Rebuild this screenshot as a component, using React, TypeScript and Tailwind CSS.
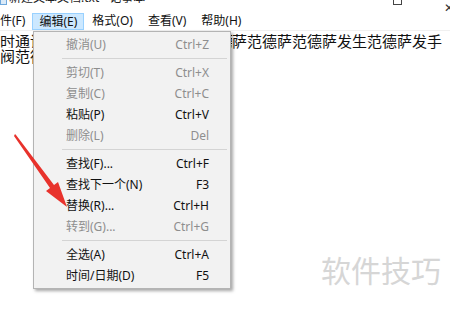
import React from "react";

type Item = { label: string; key: string; disabled?: boolean } | "sep";

const items: Item[] = [
    { label: "撤消(U)", key: "Ctrl+Z", disabled: true },
    "sep",
    { label: "剪切(T)", key: "Ctrl+X", disabled: true },
    { label: "复制(C)", key: "Ctrl+C", disabled: true },
    { label: "粘贴(P)", key: "Ctrl+V" },
    { label: "删除(L)", key: "Del", disabled: true },
    "sep",
    { label: "查找(F)...", key: "Ctrl+F" },
    { label: "查找下一个(N)", key: "F3" },
    { label: "替换(R)...", key: "Ctrl+H" },
    { label: "转到(G)...", key: "Ctrl+G", disabled: true },
    "sep",
    { label: "全选(A)", key: "Ctrl+A" },
    { label: "时间/日期(D)", key: "F5" },
];

const menus = ["编辑(E)", "格式(O)", "查看(V)", "帮助(H)"];

function EditMenu() {
    return (
        <div className="absolute left-[33px] top-[31px] z-10 w-[198px] border border-[#b4b4b4] bg-[#f2f2f2] pt-[2px] pb-[2px] shadow-[2px_2px_3px_rgba(0,0,0,0.35)]">
            {items.map((it, i) =>
                it === "sep" ? (
                    <div key={i} className="flex h-[7px] items-center pl-[28px] pr-[3px]">
                        <div className="h-px w-full bg-[#d4d4d4]" />
                    </div>
                ) : (
                    <div
                        key={i}
                        className={`flex h-[21px] items-center justify-between pl-[32px] pr-[21px] text-[12px] ${
                            it.disabled ? "text-[#8e8e8e]" : "text-[#111]"
                        }`}
                    >
                        <span>{it.label}</span>
                        <span>{it.key}</span>
                    </div>
                )
            )}
        </div>
    );
}

function Arrow() {
    return (
        <svg className="absolute left-0 top-0 z-20" width="120" height="240" viewBox="0 0 120 240">
            <polygon
                points="15,134 16,135 54,185 58,182 67,207 46,191 50,188 14,136"
                fill="#e8322c"
            />
        </svg>
    );
}

export default function App() {
    return (
        <div className="relative h-[309px] w-[450px] overflow-hidden bg-white font-['Noto_Sans','Noto_Sans_CJK_SC',sans-serif] text-black">
            {/* title bar, mostly cut off at the top */}
            <div className="relative h-[12px] overflow-hidden">
                <div className="-mt-[10px] flex items-center">
                    <div className="ml-[0px] h-[14px] w-[7px] border border-[#6fa8dc] bg-[#dbeaf7]" />
                    <span className="ml-[2px] text-[12px] leading-[16px] text-[#222]">新建文本文档.txt - 记事本</span>
                    <div className="ml-auto mr-[48px] h-[14px] w-[9px] border border-[#444]" />
                    <span className="absolute right-[-4px] top-0 text-[12px] leading-[16px] text-[#333]">✕</span>
                </div>
            </div>

            {/* menu bar */}
            <div className="flex h-[19px] items-stretch border-b border-[#f0f0f0] text-[12px] text-[#111]">
                <div className="-ml-[12px] flex items-center pr-[6px]">文件(F)</div>
                {menus.map((m, i) => (
                    <div
                        key={m}
                        className={`flex items-center px-[6px] ${
                            i === 0 ? "mt-[1px] ml-[1px] border border-[#99d1ff] bg-[#cce8ff]" : "ml-[1px] border border-transparent"
                        }`}
                    >
                        {m}
                    </div>
                ))}
            </div>

            {/* text area */}
            <div className="pt-[2px] text-[15px] leading-[15px] text-[#111] font-['Noto_Sans_CJK_SC',sans-serif]">
                <div className="flex whitespace-nowrap">
                    <span className="inline-block w-[232px] overflow-hidden">时通讯软件就发生范德萨范德萨范德</span>
                    <span>萨范德萨范德萨发生范德萨发手</span>
                </div>
                <div className="whitespace-nowrap">阀范德萨范德萨</div>
            </div>

            <EditMenu />
            <Arrow />

            <div className="absolute left-[321px] top-[252px] text-[30px] leading-[34px] text-[#d6d6d6] font-['Noto_Sans_CJK_SC',sans-serif]">
                软件技巧
            </div>
        </div>
    );
}
